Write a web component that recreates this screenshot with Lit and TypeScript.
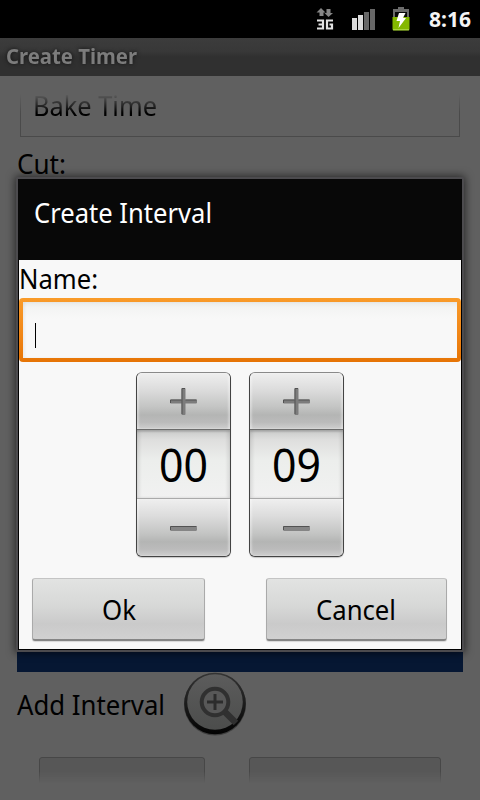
import { LitElement, html, css, svg } from "lit";
import { customElement, property } from "lit/decorators.js";

/** One line of text set to an exact advance width. */
@customElement("fit-text")
class FitText extends LitElement {
  @property() text = "";
  @property({ type: Number }) width = 100;
  @property({ type: Number }) size = 27;
  static styles = css`
    :host { display: block; flex: none; }
    svg { display: block; overflow: visible; }
    text { font-family: "Noto Sans", "Open Sans", sans-serif; fill: currentColor; }
  `;
  render() {
    return html`<svg width=${this.width} height=${this.size}>
      ${svg`<text x="0" y=${this.size} font-size=${this.size} textLength=${this.width} lengthAdjust="spacingAndGlyphs">${this.text}</text>`}
    </svg>`;
  }
}

@customElement("number-picker")
class NumberPicker extends LitElement {
  @property() value = "00";
  static styles = css`
    :host { display: block; box-sizing: border-box; width: 95px; height: 185px; border: 1px solid #444; border-top-color: #8a8a8a; border-radius: 6px; overflow: hidden; background: #ccc; box-shadow: 0 1px 1px #0003; }
    .key { box-sizing: border-box; display: flex; align-items: center; justify-content: center; background: linear-gradient(#efefef 0%, #dcdcdc 30%, #c4c5c4 60%, #b4b5b4 75%, #bbb 88%, #cfcfcf 100%); box-shadow: inset 2px 0 2px #fff5, inset -2px 0 2px #fff5; }
    svg { display: block; }
    .up { height: 56px; }
    .down { height: 57px; padding-top: 1px; }
    .value { box-sizing: border-box; height: 70px; border-top: 1px solid #6c6c6c; border-bottom: 1px solid #aaa; background: linear-gradient(#c9cac9, #dededd 14%, #eceeec 45%, #f1f1f1); box-shadow: inset 3px 0 3px #0001, inset -3px 0 3px #0001, inset 0 2px 2px #0002; display: flex; justify-content: center; padding: 6px 1px 0 0; color: #000; }
  `;
  render() {
    return html`
      <div class="key up">
        <svg width="27" height="27" viewBox="0 0 27 27">
          <path d="M11.500 1q0-1 1-1h2q1 0 1 1v10.500h10.500q1 0 1 1v2q0 1-1 1H15.500v10.500q0 1-1 1h-2q-1 0-1-1v-10.500H1q-1 0-1-1v-2q0-1 1-1h10.500z" fill="#7c7c7c" />
          <path d="M12 26V.5h3M.5 15v-3h11M15.500 12h11" fill="none" stroke="#525252" stroke-width="1" />
        </svg>
      </div>
      <div class="value"><fit-text text=${this.value} width="49" size="46"></fit-text></div>
      <div class="key down">
        <svg width="27" height="5" viewBox="0 0 27 5">
          <rect width="27" height="5" rx="1.500" fill="#858585" />
          <path d="M.5 4V.5h26" fill="none" stroke="#525252" />
        </svg>
      </div>`;
  }
}

@customElement("app-root")
class AppRoot extends LitElement {
  static styles = css`
    :host { display: block; position: relative; width: 480px; height: 800px; overflow: hidden; background: #606060; color: #000; font-family: "Noto Sans", sans-serif; }
    svg { display: block; flex: none; overflow: visible; }
    .status { height: 38px; background: #000; display: flex; align-items: flex-start; justify-content: flex-end; box-sizing: border-box; padding: 6px 9px 0 0; color: #f4f4f4; font-weight: 700; }
    .net { margin-right: 17px; }
    .signal { margin-right: 16px; }
    .battery { margin-right: 19px; }
    .titlebar { height: 38px; box-sizing: border-box; padding: 5px 0 0 6px; background: linear-gradient(#3c3c3c, #383838 35%, #303030 50%, #303030); color: #7c7c7c; font-weight: 700; }
    .titlebar fit-text { filter: drop-shadow(0 0 2px #111); }
    .field { margin: 17px 20px 0; height: 44px; box-sizing: border-box; border: solid #4a4a4a; border-width: 0 1px 1px; display: flex; align-items: flex-end; padding: 0 0 20px 12px; -webkit-mask: linear-gradient(transparent 1px, #000 20px); mask: linear-gradient(transparent 1px, #000 20px); }
    .cut { margin: 10px 0 0 17px; }
    .band { margin: 471px 17px 0; height: 27px; background: #061733; }
    .add { display: flex; height: 64px; padding-left: 17px; align-items: flex-start; }
    .add fit-text { margin: 16px 21px 0 0; }
    .ghosts { display: flex; gap: 44px; padding: 21px 0 0 39px; }
    .ghost { height: 26px; box-sizing: border-box; border: 1px solid #474747; border-bottom: 0; border-radius: 3px 3px 0 0; background: #575757; -webkit-mask: linear-gradient(#000 55%, transparent); mask: linear-gradient(#000 55%, transparent); }
    .g1 { width: 166px; }
    .g2 { width: 192px; }
    .dialog { position: absolute; left: 16px; top: 177px; width: 448px; height: 475px; box-sizing: border-box; border: 2px solid #4c4b4e; border-radius: 1px; background: #000; box-shadow: 0 0 9px 1px #0009; }
    .head { height: 81px; box-sizing: border-box; padding: 17px 0 0 16px; background: #080808; color: #fff; }
    .body { margin: 0 1px; height: 389px; background: #f8f8f8; box-sizing: border-box; padding-top: 2px; }
    .input { margin-top: 9px; height: 64px; padding: 4px; box-sizing: border-box; border-radius: 4px; background: linear-gradient(#f99b2a, #f08516 60%, #e67405); }
    .inner { height: 56px; box-sizing: border-box; padding: 21px 0 0 12px; background: linear-gradient(#e9ebe9, #f3f4f3 10%, #f8f8f8 30%); box-shadow: inset 2px 0 3px #0000000d; }
    .caret { width: 1px; height: 25px; background: #000; }
    .pickers { display: flex; gap: 18px; padding: 10px 0 0 117px; }
    .actions { display: flex; justify-content: space-between; padding: 21px 14px 0 13px; }
    .btn { height: 63px; box-sizing: border-box; border: 1px solid #aaa; border-top-color: #c4c4c4; border-bottom: 2px solid #858585; border-radius: 3px; background: linear-gradient(#e2e3e2, #d7d8d7 45%, #cacaca 75%, #d1d1d1); display: flex; justify-content: center; padding-top: 14px; box-shadow: 0 1px 1px #0002; }
    .ok { width: 173px; }
    .cancel { width: 181px; padding-right: 1px; }
  `;
  render() {
    return html`
      <div class="status">
        <svg class="net" width="18" height="25" viewBox="0 0 18 25">
          <path d="M5 2L.5 6.500h3V10h4V6.500h2zM12.500 11L8.500 7h2V3h4v4h2.500z" fill="#858585" />
          <path d="M1 14.500h6v8H1M2.500 18.500H7M17 14.500h-6v8h5V18.500h-2.500" fill="none" stroke="#e2e2e2" stroke-width="2.200" />
        </svg>
        <svg class="signal" width="25" height="26" viewBox="0 0 25 26">
          <path d="M1 12h5v12H1zM7 9h5v15H7z" fill="#dcdcdc" />
          <path d="M13 6h5v18h-5zM19 3h5v21h-5z" fill="#676767" />
        </svg>
        <svg class="battery" width="18" height="26" viewBox="0 0 18 26">
          <path d="M6 1h6v2h5v21.500H1V3h5z" fill="#6b6b6b" />
          <path d="M3 6h12v5H3z" fill="#080808" />
          <path d="M.5 11h17v12q0 1.500-1.500 1.500H2Q.5 24.500.5 23z" fill="#84b800" />
          <path d="M1 23.500h16" stroke="#a8d43a" />
          <path d="M7 7h6.500l-2.500 5h3L6.500 22 8 15H4.500z" fill="#fff" />
        </svg>
        <fit-text text="8:16" width="42" size="21"></fit-text>
      </div>
      <div class="titlebar"><fit-text text="Create Timer" width="131" size="21"></fit-text></div>
      <div class="field"><fit-text text="Bake Time" width="124" size="27"></fit-text></div>
      <fit-text class="cut" text="Cut:" width="49" size="27"></fit-text>
      <div class="band"></div>
      <div class="add">
        <fit-text text="Add Interval" width="148" size="27"></fit-text>
        <svg width="64" height="66" viewBox="0 0 64 66">
          <defs>
            <linearGradient id="rim" x1="0" y1="0" x2="0" y2="1"><stop offset="0" stop-color="#343434" /><stop offset=".5" stop-color="#1c1c1c" /><stop offset="1" stop-color="#020202" /></linearGradient>
            <linearGradient id="face" x1="0" y1="0" x2="0" y2="1"><stop offset="0" stop-color="#5c5c5c" /><stop offset="1" stop-color="#4c4d4c" /></linearGradient>
          </defs>
          <circle cx="29" cy="32.500" r="31" fill="#000" opacity=".35" />
          <circle cx="29" cy="31.500" r="30.800" fill="url(#rim)" />
          <circle cx="29" cy="30" r="27.800" fill="url(#face)" />
          <path d="M38 39l12 12" stroke="#303030" stroke-width="6.500" />
          <circle cx="29" cy="30" r="13.300" fill="#585858" stroke="#303030" stroke-width="4" />
          <path d="M29 22v16M21 30h16" stroke="#2c2c2c" stroke-width="3" />
        </svg>
      </div>
      <div class="ghosts"><div class="ghost g1"></div><div class="ghost g2"></div></div>

      <div class="dialog">
        <div class="head"><fit-text text="Create Interval" width="178" size="27"></fit-text></div>
        <div class="body">
          <fit-text text="Name:" width="79" size="27"></fit-text>
          <div class="input"><div class="inner"><div class="caret"></div></div></div>
          <div class="pickers">
            <number-picker value="00"></number-picker>
            <number-picker value="09"></number-picker>
          </div>
          <div class="actions">
            <div class="btn ok"><fit-text text="Ok" width="34" size="27"></fit-text></div>
            <div class="btn cancel"><fit-text text="Cancel" width="80" size="27"></fit-text></div>
          </div>
        </div>
      </div>`;
  }
}
